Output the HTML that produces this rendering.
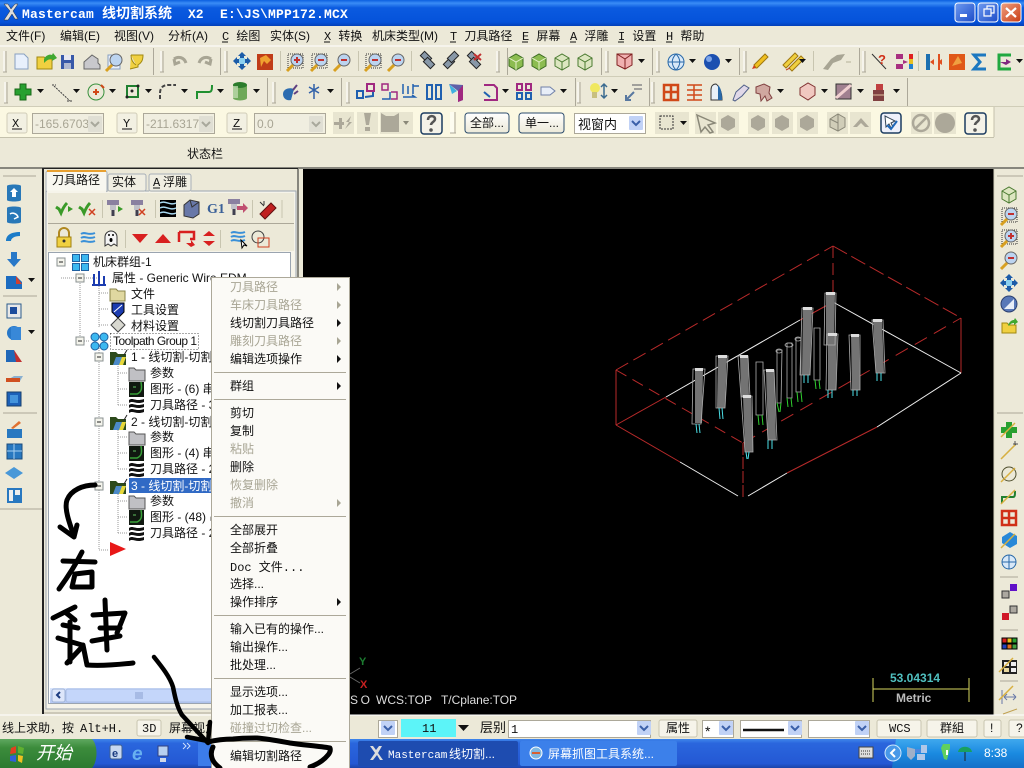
<!DOCTYPE html>
<html lang="zh"><head><meta charset="utf-8"><title>Mastercam</title>
<style>
html,body{margin:0;padding:0;background:#ece9d8;width:1024px;height:768px;overflow:hidden}
svg{display:block}
text{font-family:"Liberation Sans","WenQuanYi Zen Hei","Noto Sans CJK SC",sans-serif;font-size:12px;fill:#111}
.m{font-family:"Liberation Mono","WenQuanYi Zen Hei","Noto Sans CJK SC",monospace}
.d{fill:#a8a594}
.w{fill:#fff}
</style></head><body>
<svg width="1024" height="768" viewBox="0 0 1024 768" xmlns="http://www.w3.org/2000/svg">
<defs>
<linearGradient id="tb" x1="0" y1="0" x2="0" y2="1"><stop offset="0" stop-color="#0a5fe0"/><stop offset=".12" stop-color="#3a8cf6"/><stop offset=".3" stop-color="#0b5be0"/><stop offset=".85" stop-color="#0552da"/><stop offset="1" stop-color="#0340b8"/></linearGradient>
<linearGradient id="task" x1="0" y1="0" x2="0" y2="1"><stop offset="0" stop-color="#3f86ea"/><stop offset=".15" stop-color="#2a66dd"/><stop offset=".85" stop-color="#2458d4"/><stop offset="1" stop-color="#1c44a8"/></linearGradient>
<linearGradient id="tray" x1="0" y1="0" x2="0" y2="1"><stop offset="0" stop-color="#3fa8ee"/><stop offset=".5" stop-color="#1a8ae0"/><stop offset="1" stop-color="#1570c8"/></linearGradient>
<linearGradient id="start" x1="0" y1="0" x2="0" y2="1"><stop offset="0" stop-color="#5fa860"/><stop offset=".3" stop-color="#3c8c3c"/><stop offset="1" stop-color="#2c7a30"/></linearGradient>
<linearGradient id="btn" x1="0" y1="0" x2="0" y2="1"><stop offset="0" stop-color="#fff"/><stop offset="1" stop-color="#ece9d8"/></linearGradient>
<linearGradient id="wb" x1="0" y1="0" x2="1" y2="1"><stop offset="0" stop-color="#6f9bf0"/><stop offset="1" stop-color="#1c4cc8"/></linearGradient>
<linearGradient id="wr" x1="0" y1="0" x2="1" y2="1"><stop offset="0" stop-color="#f0a080"/><stop offset="1" stop-color="#c83c14"/></linearGradient>
<linearGradient id="sc" x1="0" y1="0" x2="0" y2="1"><stop offset="0" stop-color="#dbe6fc"/><stop offset="1" stop-color="#b4c8f4"/></linearGradient>

<g id="arr"><path d="M-3-2h7l-3.500 4z" fill="#111"/></g>
<g id="grip"><path d="M1 3v21" stroke="#fff" fill="none"/><path d="M3 3v21" stroke="#aca899" fill="none"/><path d="M0 24h4" stroke="#aca899"/></g>
<g id="sel"><rect x="-7" y="-7" width="14" height="14" fill="#c1d2f6" rx="1"/><path d="M-4-2l4 4 4-4" stroke="#3a5fa8" stroke-width="2" fill="none"/></g>
<g id="seld"><rect x="-7" y="-8" width="14" height="16" fill="#e0dfd4" rx="1"/><path d="M-4-2l4 4 4-4" stroke="#a8a89c" stroke-width="2" fill="none"/></g>
<g id="cube"><path d="M-7-4L0-8l7 4v8l-7 4-7-4z" fill="#8cbc50" stroke="#3a6a20"/><path d="M-7-4l7 4 7-4M0 0v8" stroke="#e4f0c8" fill="none"/></g>
<g id="cube2"><path d="M-7-4L0-8l7 4v8l-7 4-7-4z" fill="#dce6c0" stroke="#4a7a30"/><path d="M-7-4l7 4 7-4M0 0v8" stroke="#4a7a30" fill="none"/></g>
<g id="mag"><circle cx="2" cy="-2" r="6" fill="#bcd4f0" stroke="#666"/><path d="M-2 3l-6 6" stroke="#d8a020" stroke-width="3"/></g>
<g id="magp"><rect x="-7" y="-8" width="15" height="14" fill="none" stroke="#333" stroke-dasharray="1 1"/><use href="#mag"/><path d="M-1-2h6M2-5v6" stroke="#c03030" stroke-width="2"/></g>
<g id="magm"><use href="#mag"/><path d="M-1-2h6" stroke="#c03030" stroke-width="2"/></g>
<g id="magb"><rect x="-7" y="-8" width="15" height="14" fill="none" stroke="#333" stroke-dasharray="1 1"/><use href="#magm"/></g>
<g id="pan"><path d="M0-9l4 4H2v3h3V-4l4 4-4 4V2H2v3h2l-4 4-4-4h2V2h-3v2l-4-4 4-4v2h3v-3h-2z" fill="#1c5ca8"/><rect x="-3" y="-3" width="6" height="6" fill="#8cd0f0"/></g>
<g id="cy"><rect x="-7" y="-6" width="14" height="13" fill="#6ea858"/><ellipse cx="0" cy="-6" rx="7" ry="3" fill="#2c7c2c"/><ellipse cx="0" cy="7" rx="7" ry="2.500" fill="#6ea858"/><rect x="-7" y="-5" width="5" height="12" fill="#c8e0b8" opacity=".7"/></g>
<g id="disb"><rect x="-10" y="-11" width="21" height="22" fill="#e8e5d0"/></g>
<g id="hex"><use href="#disb"/><path d="M-7-4l7-4 7 4v8l-7 4-7-4z" fill="#aca899"/></g>
<g id="que"><rect x="-10" y="-10" width="21" height="21" rx="3" fill="#f4f2e8" stroke="#1c3c60" stroke-width="1.500"/><path d="M-3-3c0-5 7-5 7-1 0 3-4 3-4 6" stroke="#555" stroke-width="2.500" fill="none"/><circle cx="0" cy="7" r="1.800" fill="#555"/></g>
<g id="fold"><path d="M-8-5h6l2 2h7v10H-8z" fill="#e0d8a0" stroke="#8a8448"/></g>
<g id="opfold"><path d="M-8-5h6l2 2h8v11H-8z" fill="#2c4a1c"/><path d="M-5 8l3-8h10l-3 8z" fill="#4c8ac8"/><path d="M1 8l3-8h4l-3 8z" fill="#e8d838"/><path d="M6-2l3-5" stroke="#222"/></g>
<g id="gfold"><path d="M-8-5h5l2 2h9v11H-8z" fill="#c0c0c4" stroke="#555"/></g>
<g id="geom"><rect x="-8" y="-7" width="15" height="15" fill="#101810"/><path d="M4-7c1 6 1 10-4 12H-7" stroke="#38a038" stroke-width="1.500" fill="none"/><path d="M-4-2h3" stroke="#60c060"/></g>
<g id="wave"><rect x="-8" y="-7" width="15" height="15" fill="#fff"/><path d="M-8-5c4-3 6 2 15-1v3c-8 3-11-2-15 1zM-8 0c4-3 6 2 15-1v3c-8 3-11-2-15 1zM-8 5c4-3 6 2 15-1v3c-8 3-11-2-15 1z" fill="#111"/></g>
<g id="bw"><path d="M-7-4c4-3 7 2 14-1M-7 0c4-3 7 2 14-1M-7 4c4-3 7 2 14-1" stroke="#3a90d8" stroke-width="2" fill="none"/></g>
<g id="minus"><rect x="-4" y="-4" width="8" height="8" fill="#f4f4ec" stroke="#8a9090"/><path d="M-2 0h4" stroke="#222"/></g>
<g id="tool"><rect x="-6" y="-8" width="12" height="5" fill="#8a80a0"/><rect x="-3" y="-3" width="6" height="5" fill="#c0c0c8"/><rect x="-1.500" y="2" width="3" height="6" fill="#404050"/></g>
<g id="chk"><path d="M-7-1l3 2 2 4c2-5 4-8 6-10" stroke="#3a9a28" stroke-width="3" fill="none"/></g>
<g id="la"><path d="M-6-5l12 10M-2-7l-4 2 2 4" stroke="#3a90d0" fill="none"/></g>
<g id="blk"><rect x="-7" y="-7" width="14" height="14" fill="#1c60b8" stroke="#18406c"/><rect x="-4" y="-4" width="8" height="8" fill="#4494dc"/></g>
<g id="ps"><path d="M-8 8l14-14" stroke="#d8b040" stroke-width="1.500"/></g>
</defs>

<rect width="1024" height="768" fill="#ece9d8"/>
<!-- title -->
<rect width="1024" height="26" fill="url(#tb)"/>
<path d="M4 4l6 7-6 9h4l4-6 3 5h3l-5-8 5-7h-3l-4 5-3-5z" fill="#ddd" stroke="#333" stroke-width=".5"/>
<text x="22" y="18" class="w m" style="font-size:13px;font-weight:700;letter-spacing:.2px">Mastercam</text>
<text x="102" y="18" class="w" style="font-size:14px;font-weight:700">线切割系统</text>
<text x="188" y="18" class="w m" style="font-size:13px;font-weight:700">X2</text>
<text x="220" y="18" class="w m" style="font-size:13px;font-weight:700;letter-spacing:.2px">E:\JS\MPP172.MCX</text>
<rect x="955" y="3" width="20" height="19" rx="3" fill="url(#wb)" stroke="#fff"/><rect x="960" y="14" width="7" height="3" fill="#fff"/>
<rect x="978" y="3" width="20" height="19" rx="3" fill="url(#wb)" stroke="#fff"/><path d="M984 9h7v7h-7zM987 9V6h7v7h-3" fill="none" stroke="#fff" stroke-width="1.200"/>
<rect x="1001" y="3" width="20" height="19" rx="3" fill="url(#wr)" stroke="#fff"/><path d="M1006 8l10 9M1016 8l-10 9" stroke="#fff" stroke-width="2.200"/>

<!-- menu -->
<g>
<text x="6" y="40">文件(F)</text><text x="60" y="40">编辑(E)</text><text x="114" y="40">视图(V)</text><text x="168" y="40">分析(A)</text>
<text x="222" y="40" class="m">C 绘图</text><text x="270" y="40">实体(S)</text><text x="324" y="40" class="m">X 转换</text><text x="372" y="40">机床类型(M)</text>
<text x="450" y="40" class="m">T 刀具路径</text><text x="522" y="40" class="m">E 屏幕</text><text x="570" y="40" class="m">A 浮雕</text><text x="618" y="40" class="m">I 设置</text><text x="666" y="40" class="m">H 帮助</text>
</g>
<path d="M222 42h6M324 42h6M450 42h6M522 42h6M570 42h6M618 42h6M666 42h6" stroke="#111"/>
<path d="M0 46h1024" stroke="#fff"/><path d="M0 76.500h1024M0 106.500h1024" stroke="#d0cdb8"/>
<!-- yellow bar -->
<rect x="0" y="107" width="994" height="30" fill="#fbf8e2"/>
<path d="M0 137.500h994M994 107v30" stroke="#c4c1ac"/>
<path d="M0 168h1024" stroke="#222" stroke-width="1"/>
<text x="187" y="158">状态栏</text>

<!-- toolbar 1 separators -->
<path d="M153.500 48v27M220.500 48v27M601.500 48v27M652.500 48v27M739.500 48v27M859.500 48v27M267.500 78v28M341.500 78v28M575.500 78v28M649.500 78v28M907.500 78v28" stroke="#aca899"/>
<path d="M280.500 51v20M358.500 51v20M411.500 51v20M813.500 51v20M918.500 51v20" stroke="#c8c5b0"/>
<use href="#grip" x="3" y="48"/><use href="#grip" x="160" y="48"/><use href="#grip" x="224" y="48"/><use href="#grip" x="496" y="48"/><use href="#grip" x="605" y="48"/><use href="#grip" x="656" y="48"/><use href="#grip" x="743" y="48"/><use href="#grip" x="862" y="48"/>
<use href="#grip" x="4" y="79"/><use href="#grip" x="272" y="79"/><use href="#grip" x="346" y="79"/><use href="#grip" x="577" y="79"/><use href="#grip" x="651" y="79"/><use href="#grip" x="450" y="109"/>

<!-- row1 icons -->
<path d="M15 54h9l4 4v11H15z" fill="#e8f0fc" stroke="#88a0c0"/>
<path d="M37 57h7l2 2h6v10H37z" fill="#f0d040" stroke="#a08810"/><path d="M44 59c2-4 6-5 8-4l1-2 4 5-5 3v-2c-3 0-5 1-8 4z" fill="#40a830"/>
<rect x="61" y="55" width="13" height="14" fill="#3858a8"/><rect x="64" y="55" width="7" height="5" fill="#e8e8f0"/><rect x="64" y="63" width="7" height="6" fill="#b0b8d0"/>
<path d="M84 62l8-7 6 4v4l2 2v4H84z" fill="#c8c8cc" stroke="#666"/>
<path d="M108 55h9l3 3v11h-12z" fill="#e8f0fc" stroke="#88a0c0"/><use href="#mag" x="114" y="62"/>
<path d="M131 55h12c0 6-2 8-5 10v2l-8 2M131 55c0 5 2 8 5 10" fill="#f0d040" stroke="#a08810"/>
<path d="M174 59c4-3 10-2 12 4M174 59l1 5 5-2" fill="none" stroke="#a8a594" stroke-width="3"/><path d="M211 59c-4-3-10-2-12 4M211 59l-1 5-5-2" fill="none" stroke="#a8a594" stroke-width="3"/>
<use href="#pan" x="242" y="61"/>
<rect x="257" y="54" width="16" height="16" fill="#c03c18"/><path d="M260 58l6-3 5 5-4 4-3-3-3 6z" fill="#f0a030"/>
<use href="#magp" x="295" y="62"/><use href="#magb" x="319" y="62"/><use href="#magm" x="342" y="62"/><use href="#magb" x="373" y="62"/><use href="#magm" x="396" y="62"/>
<g fill="#8898a8" stroke="#222"><rect x="421" y="54" width="10" height="6" transform="rotate(45 426 57)"/><rect x="424" y="60" width="10" height="6" transform="rotate(45 429 63)"/><rect x="444" y="60" width="10" height="6" transform="rotate(-45 449 63)"/><rect x="448" y="54" width="10" height="6" transform="rotate(-45 453 57)"/><rect x="468" y="54" width="10" height="6" transform="rotate(45 473 57)"/><rect x="470" y="60" width="10" height="6" transform="rotate(45 475 63)"/></g>
<path d="M474 60l7-6M474 54l7 6" stroke="#c03030" stroke-width="2"/>
<path d="M507.500 48v27" stroke="#aca899"/>
<use href="#cube" x="516" y="62"/><use href="#cube" x="539" y="62"/><use href="#cube2" x="562" y="62"/><use href="#cube2" x="585" y="62"/>
<path d="M617 54h15v11l-7 4-8-4z" fill="#f0b0b0" stroke="#802020"/><path d="M617 54l8 5 7-5M625 59v10" stroke="#802020" fill="none"/><use href="#arr" x="641" y="61"/>
<circle cx="676" cy="62" r="8" fill="#d8e8f8" stroke="#2868a8"/><path d="M668 62h16M676 54c-5 5-5 11 0 16M676 54c5 5 5 11 0 16" stroke="#2868a8" fill="none"/><use href="#arr" x="692" y="61"/>
<circle cx="712" cy="62" r="8" fill="#1c50b0"/><circle cx="709" cy="59" r="3" fill="#7ca4e8"/><use href="#arr" x="728" y="61"/>
<path d="M756 68l-2-3 11-11 3 3-11 11z" fill="#f0c020" stroke="#a07810"/><path d="M754 65l2 3-4 1z" fill="#d04020"/>
<path d="M789 68l12-12 3 3-12 12zM783 65l12-12 3 3-12 12z" fill="#f0d040" stroke="#a07810"/><path d="M786 70l4-2" stroke="#c04020"/><use href="#arr" x="802" y="61"/>
<path d="M823 69l8-10 6-4 8-1-4 6-8 3-5 7z" fill="#a8a594"/><path d="M846 62h5" stroke="#d0cdb8" stroke-width="2"/>
<path d="M872 54l14 15" stroke="#333"/><text x="878" y="64" style="fill:#d03018;font-weight:700;font-size:13px">?</text>
<path d="M896 54h7v5h-7zM896 64h7v5h-7zM903 60l5 2-5 2z" fill="#a83080"/><path d="M909 54h4v5h-4z" fill="#e02020"/><path d="M909 59h4v5h-4z" fill="#e8c020"/><path d="M909 64h4v5h-4z" fill="#2080d0"/>
<rect x="926" y="54" width="4" height="16" fill="#1c70b0"/><path d="M930 62l4-3v6zM938 62l4-3v6z" fill="#e05020"/><rect x="938" y="54" width="2" height="16" fill="#e05020"/>
<rect x="949" y="54" width="16" height="16" fill="#e05818"/><path d="M952 66l6-10 4 7z" fill="#f0a040"/>
<path d="M986 55h-12l6 7-6 7h12" fill="none" stroke="#1c78c0" stroke-width="3"/>
<path d="M1011 55h-12v14h12" fill="none" stroke="#20a840" stroke-width="3"/><path d="M1000 62h6v-3l5 3-5 3z" fill="#802880" /><use href="#arr" x="1019" y="61"/>

<!-- row2 icons -->
<path d="M20 84h6v5h5v6h-5v5h-6v-5h-5v-6h5z" fill="#28a030" stroke="#186818"/><use href="#arr" x="40" y="91"/>
<path d="M54 86l16 15M52 85h4M67 101h5" stroke="#404040" stroke-dasharray="2 1" fill="none"/><use href="#arr" x="76" y="91"/>
<circle cx="96" cy="92" r="8" fill="none" stroke="#38903c"/><path d="M93 92h6M96 89v6" stroke="#d04818" stroke-width="2"/><path d="M101 85l3 3" stroke="#d04818" stroke-width="2"/><use href="#arr" x="112" y="91"/>
<rect x="127" y="86" width="11" height="11" fill="none" stroke="#208030" stroke-width="2"/><circle cx="127" cy="97" r="1.500" fill="#222"/><circle cx="138" cy="86" r="1.500" fill="#222"/><circle cx="132" cy="91" r="1.500" fill="#222"/><use href="#arr" x="148" y="91"/>
<path d="M160 99v-6c0-5 3-8 8-8h8" fill="none" stroke="#444" stroke-width="2" stroke-dasharray="4 2"/><use href="#arr" x="184" y="91"/>
<path d="M197 99v-7h12c3 0 3-3 3-7" fill="none" stroke="#209030" stroke-width="2"/><use href="#arr" x="220" y="91"/>
<use href="#cy" x="240" y="91"/><use href="#arr" x="256" y="91"/>
<path d="M283 94c0-5 6-7 11-5l-3 11c-5 1-8-2-8-6z" fill="#2c6cb0"/><path d="M293 90l4-5M294 94l4-3" stroke="#604080" stroke-width="2"/>
<path d="M314 84v15M309 87l10 6M319 87l-10 6" stroke="#3060a8" stroke-width="1.500"/><use href="#arr" x="330" y="91"/>
<g fill="none" stroke="#2060b0" stroke-width="2"><rect x="357" y="91" width="6" height="7"/><rect x="427" y="85" width="5" height="14"/><rect x="436" y="85" width="5" height="14"/></g><rect x="367" y="84" width="7" height="7" fill="none" stroke="#a02880" stroke-width="2"/>
<path d="M365 97l8-1v-4" stroke="#2060b0" stroke-width="2" fill="none"/>
<path d="M382 84h6v6h-6zM391 92h6v7h-6" fill="none" stroke="#a02880" stroke-width="1.500"/><path d="M390 92v7h-8" stroke="#2060b0" stroke-width="1.500" fill="none"/>
<path d="M403 84v10M408 86v8M413 84v10M419 86h-6M403 97h12l-3-2" stroke="#2060b0" stroke-width="1.500" fill="none"/>
<path d="M449 84l14 1v15l-5 2v-11z" fill="#6060a8"/><path d="M449 84l8 7-5 3z" fill="#40b0e0"/><path d="M458 91l5-6v15l-5 2z" fill="#a02880"/>
<path d="M484 85h10l3 3v12h-13" fill="none" stroke="#a02880" stroke-width="2"/><path d="M484 92l6 5" stroke="#2060b0" stroke-width="2"/><use href="#arr" x="505" y="91"/>
<g fill="none" stroke="#a02880" stroke-width="2"><rect x="517" y="84" width="5" height="6"/><rect x="526" y="84" width="5" height="6"/></g><g fill="none" stroke="#2060b0" stroke-width="2"><rect x="517" y="93" width="5" height="6"/><rect x="526" y="93" width="5" height="6"/></g>
<path d="M541 87h9l5 4-5 4h-9z" fill="#e8eef8" stroke="#7080a8"/><use href="#arr" x="563" y="91"/>
<circle cx="595" cy="88" r="5" fill="#f0e860"/><rect x="592" y="92" width="5" height="6" fill="#c8c080"/><path d="M604 84v14M601 87l3-3 3 3M601 95l3 3 3-3" stroke="#3a6a90" fill="none" stroke-width="1.500"/><use href="#arr" x="614" y="91"/>
<path d="M626 100l8-8M626 95v5h5" stroke="#5878a0" stroke-width="2" fill="none"/><path d="M632 85h10M634 89h8" stroke="#888" stroke-width="1.500"/>
<path d="M664 85h14v15h-14zM671 85v15M664 92h14" fill="none" stroke="#d04818" stroke-width="2.500"/>
<path d="M687 85h15M687 90h15M687 95h15M687 100h15M694 85v15" fill="none" stroke="#d04818" stroke-width="1.500"/>
<path d="M711 100V90c0-4 2-6 5-6 3 2 6 8 6 16z" fill="#e8f0f8" stroke="#333"/><path d="M718 85c3 3 4 8 4 15h-4z" fill="#2868a8"/>
<path d="M733 100l3-8 8-7 5 3-7 8-7 5z" fill="#e0d8e8" stroke="#506088"/>
<path d="M756 87l8-3 6 3-1 6 3 5-5 3-2-5-4 5-1-7-4-1z" fill="#d0a8a0" stroke="#804040"/><use href="#arr" x="780" y="91"/>
<path d="M800 88l8-5 7 4v8l-7 5-8-5z" fill="#f0c8c0" stroke="#803030"/><use href="#arr" x="824" y="91"/>
<rect x="836" y="84" width="15" height="15" fill="#a08090" stroke="#333"/><path d="M836 98l15-13" stroke="#f0d0d0" stroke-width="3"/><use href="#arr" x="860" y="91"/>
<rect x="876" y="84" width="7" height="6" fill="#c04040"/><rect x="873" y="90" width="11" height="11" fill="#804040"/><path d="M873 95h11" stroke="#e0c0a0"/><use href="#arr" x="896" y="91"/>

<!-- row3 -->
<rect x="7" y="113" width="20" height="20" rx="2" fill="#f2f0e2" stroke="#d0cdb8"/><text x="12" y="127" class="m">X</text><path d="M12 129h10" stroke="#111"/>
<rect x="32.500" y="113.500" width="71" height="20" fill="#f0eee0" stroke="#aca899"/><text x="35" y="128" class="d">-165.6703</text><use href="#seld" x="95" y="124"/>
<rect x="117" y="113" width="20" height="20" rx="2" fill="#f2f0e2" stroke="#d0cdb8"/><text x="123" y="127" class="m">Y</text><path d="M122 129h10" stroke="#111"/>
<rect x="143.500" y="113.500" width="71" height="20" fill="#f0eee0" stroke="#aca899"/><text x="146" y="128" class="d">-211.6317</text><use href="#seld" x="206" y="124"/>
<rect x="227" y="113" width="20" height="20" rx="2" fill="#f2f0e2" stroke="#d0cdb8"/><text x="233" y="127" class="m">Z</text><path d="M232 129h10" stroke="#111"/>
<rect x="254.500" y="113.500" width="71" height="20" fill="#f0eee0" stroke="#aca899"/><text x="257" y="128" class="d">0.0</text><use href="#seld" x="316" y="124"/>
<rect x="333" y="112" width="21" height="22" fill="#e8e5d0"/><path d="M334 122h5v-4h3v4h2v3h-2v4h-3v-4h-5zM345 129l4-7h-3l5-6-2 6h3z" fill="#aca899"/>
<rect x="357" y="112" width="21" height="22" fill="#e8e5d0"/><path d="M364 113h7l-2 12h-3zM365 127h5v4h-5z" fill="#aca899"/>
<rect x="380" y="112" width="33" height="22" fill="#e8e5d0"/><path d="M381 113l5 3h8l5-3v19h-18z" fill="#aca899"/><path d="M403 121h6l-3 4z" fill="#8a8878"/>
<use href="#que" x="431" y="123"/>
<use href="#grip" x="452" y="109"/>
<rect x="465" y="113" width="44" height="20" rx="3" fill="url(#btn)" stroke="#2c4c6c"/><text x="470" y="127">全部...</text>
<rect x="519" y="113" width="45" height="20" rx="3" fill="url(#btn)" stroke="#2c4c6c"/><text x="525" y="127">单一...</text>
<rect x="574.500" y="113.500" width="71" height="20" fill="#fff" stroke="#aca899"/><text x="578" y="129" style="font-size:13px">视窗内</text><use href="#sel" x="636" y="123"/>
<rect x="655" y="112" width="34" height="22" fill="#e8e5d0"/><rect x="660" y="116" width="13" height="13" fill="none" stroke="#333" stroke-dasharray="2 1"/><use href="#arr" x="683" y="123"/>
<rect x="695" y="112" width="21" height="22" fill="#e8e5d0"/><path d="M697 115l18 8-7 2 5 7-3 1-5-6-4 5z" fill="#e8e5d0" stroke="#8a8878" stroke-width="1.500"/>
<use href="#hex" x="728" y="123"/><use href="#hex" x="758" y="123"/><use href="#hex" x="782" y="123"/><use href="#hex" x="807" y="123"/>
<rect x="827" y="112" width="21" height="22" fill="#e8e5d0"/><path d="M830 119l8-5 7 4v9l-7 4-8-4z" fill="#d0cdb8" stroke="#8a8878"/><path d="M838 114v17M830 119l8 4" stroke="#8a8878"/>
<rect x="850" y="112" width="21" height="22" fill="#e8e5d0"/><path d="M853 127l8-9 8 9-4 0-4-4-4 4z" fill="#aca899"/>
<rect x="881" y="113" width="20" height="20" rx="3" fill="#eef0fa" stroke="#1c3c60" stroke-width="1.500"/><path d="M885 116l10 5-4 2 2 4-2 1-2-4-3 3z" fill="#fff" stroke="#345"/><path d="M887 125l4 4 6-8" stroke="#2068b8" stroke-width="2" fill="none"/>
<rect x="911" y="112" width="21" height="22" fill="#e8e5d0"/><circle cx="921" cy="123" r="8" fill="none" stroke="#aca899" stroke-width="2.500"/><path d="M915 129l12-12" stroke="#aca899" stroke-width="2.500"/>
<rect x="934" y="112" width="22" height="22" fill="#e8e5d0"/><circle cx="945" cy="123" r="10" fill="#aca899"/>
<use href="#que" x="975" y="123"/>

<!-- viewport -->
<rect x="303" y="169" width="691" height="546" fill="#000"/>

<!-- 3D scene -->
<g fill="none" stroke-width="1">
<g stroke="#b82a2a">
<path d="M616 370L833 246" stroke-dasharray="14 6"/><path d="M833 246L961 318" stroke-dasharray="16 5"/>
<path d="M616 370L743 443" stroke-dasharray="12 7"/><path d="M743 443L961 318" stroke-dasharray="14 8"/>
<path d="M833 246V302" stroke-dasharray="12 5"/><path d="M743 443V497" stroke-dasharray="12 2"/>
<path d="M616 370v55M961 318v55"/>
<path d="M616 425L666 397"/><path d="M800 320L833 302"/><path d="M616 425L680 462"/>
<path d="M787 473L877 427"/>
</g>
<g stroke="#eeeeee"><path d="M666 397L800 320"/><path d="M833 302L961 373"/><path d="M961 373L877 427"/><path d="M787 473L748 496"/><path d="M680 462L738 496"/></g>
</g>
<!-- gray tool bodies: outline then solid core -->
<g fill="#737373" stroke="none">
<path d="M695 369h8l-1 54h-7z"/>
<path d="M718 356h9l-2 52h-8z"/>
<path d="M740 356h8l1 41h-8z"/><path d="M743 396h8l2 56h-8z"/>
<path d="M766 370h8l2 70h-8z"/>
<path d="M803 308h9l-2 67h-8z"/><path d="M826 293h9l-1 52h-8z"/>
<path d="M828 334h9l-1 56h-8z"/><path d="M851 335h8l1 55h-8z"/><path d="M873 320h9l2 53h-8z"/>
</g>
<g fill="none" stroke="#b0b0b0" stroke-width=".8">
<path d="M693 369h12l-4 55h-9zM716 356h12l-3 52h-9zM738 356h10l2 41h-9zM741 396h11l1 56h-8zM764 370h10l3 70h-9zM802 308h11l-3 67h-10zM825 293h11l-1 52h-11zM827 334h11l-2 56h-10zM849 335h11l0 55h-9zM872 320h11l2 53h-9z"/>
<path d="M756 362h7v53h-7zM777 350h5l-1 53h-4zM787 343h5v55h-5zM796 338h5v54h-5zM814 328h6v52h-6z"/>
<ellipse cx="779" cy="351" rx="3" ry="2"/><ellipse cx="789" cy="345" rx="4" ry="2"/><ellipse cx="798" cy="339" rx="3" ry="2"/>
</g>
<g fill="#ddd"><rect x="695" y="368" width="8" height="3"/><rect x="718" y="355" width="9" height="3"/><rect x="740" y="355" width="8" height="3"/><rect x="743" y="395" width="8" height="3"/><rect x="766" y="369" width="8" height="3"/><rect x="803" y="307" width="9" height="3"/><rect x="826" y="292" width="9" height="3"/><rect x="828" y="333" width="9" height="3"/><rect x="851" y="334" width="8" height="3"/><rect x="873" y="319" width="9" height="3"/></g>
<g stroke="#4ce0e8" fill="none" stroke-width="1"><path d="M696 424l1 9M699 424l1 9M719 408l1 11M722 408l1 11M746 452l1 7M749 452l-1 7M768 440v9M772 440v9M804 375v8M808 375v8M877 373v8M881 373v8M853 390v6M857 390v6M828 390v8M832 390v8"/></g>
<g stroke="#30d030" fill="none" stroke-width="1"><path d="M758 415l1 10M762 415l1 10M777 403l2 9M781 403l-1 9M787 398l1 9M791 398l1 9M797 392l1 10M801 392l1 10M815 380l1 9M819 380l1 9"/></g>

<text x="350" y="704" style="fill:#ddd" textLength="20">SO</text><text x="376" y="704" style="fill:#ddd" textLength="56">WCS:TOP</text><text x="441" y="704" style="fill:#ddd" textLength="76">T/Cplane:TOP</text>
<text x="359" y="665" style="fill:#1c7c30;font-weight:700;font-size:11px">Y</text><text x="360" y="688" style="fill:#c82020;font-weight:700;font-size:11px">X</text>
<path d="M350 674l10-6M350 677l10 6" stroke="#666"/>
<path d="M873 678v24M969 678v24M873 689h96" stroke="#d8d860" fill="none"/>
<text x="890" y="682" style="fill:#50c0c0;font-weight:700">53.04314</text><text x="896" y="702" style="fill:#bbb;font-weight:700">Metric</text>

<!-- left toolbar -->
<path d="M3 176h33" stroke="#aca899"/>
<rect x="42" y="168" width="2" height="546" fill="#222"/>
<g>
<path d="M7 186c0-2 14-2 14 0v14c0 2-14 2-14 0z" fill="#2878b8"/><path d="M14 188l-4 4h2v5h4v-5h2z" fill="#fff"/>
<path d="M7 208c0-2 14-2 14 0v14c0 2-14 2-14 0z" fill="#2878b8"/><path d="M10 214c3-2 7 0 8 3l-4 2" stroke="#fff" stroke-width="1.500" fill="none"/>
<path d="M6 241c0-6 5-9 14-9v4c-5 0-9 2-9 5z" fill="#1c7cc8"/>
<path d="M11 252h6v7h4l-7 8-7-8h4z" fill="#2878c8"/>
<path d="M6 276h10l6 6v7H6z" fill="#1c6cc0"/><path d="M16 276l6 8h-6z" fill="#d04030"/><use href="#arr" x="31" y="280"/>
<path d="M3 296h34" stroke="#aca899"/>
<rect x="7" y="304" width="14" height="14" fill="#e8e8e8" stroke="#2c5c8c"/><rect x="10" y="307" width="7" height="7" fill="#1c4c9c"/>
<circle cx="14" cy="333" r="7" fill="#2878c8"/><rect x="11" y="327" width="10" height="13" fill="#3888d8"/><use href="#arr" x="31" y="332"/>
<path d="M6 350h8l8 12H6z" fill="#c03030"/><path d="M6 350h8l2 12H6z" fill="#2068b8"/>
<path d="M6 381l8-5h9l-3 5z" fill="#8ab0d0"/><rect x="6" y="378" width="14" height="4" fill="#d05020"/>
<use href="#blk" x="14" y="399"/>
<path d="M3 413h34" stroke="#aca899"/>
<rect x="7" y="429" width="15" height="9" fill="#2878c0"/><path d="M11 428l8-7 2 2-8 6z" fill="#e07030"/>
<rect x="7" y="444" width="15" height="15" fill="#2878c0" stroke="#1c4c7c"/><path d="M14 444v15M7 451h15" stroke="#a8d0f0"/>
<path d="M5 473l9-6 9 6-9 6z" fill="#4898d8"/>
<rect x="7" y="488" width="15" height="15" fill="#2878c0"/><rect x="9" y="490" width="4" height="11" fill="#eee"/><rect x="15" y="490" width="5" height="5" fill="#eee"/>
<path d="M0 509h42" stroke="#aca899"/>
</g>

<!-- panel -->
<rect x="44" y="168" width="254" height="546" fill="#ece9d8"/>
<path d="M298 169v545" stroke="#222" stroke-width="1"/>
<path d="M44 168.500h254" stroke="#222"/>
<path d="M44 713h254" stroke="#aca899"/>
<rect x="46" y="191" width="250" height="518" fill="#f6f4ea" stroke="#9aa4b0"/>
<path d="M108 190h37v2h-37zM149 190h42v2h-42z" fill="#e8e5d8"/>
<rect x="108" y="174" width="38" height="17" rx="2" fill="#f0eee2" stroke="#a8b0b8"/><rect x="149" y="174" width="42" height="17" rx="2" fill="#f0eee2" stroke="#a8b0b8"/>
<rect x="46" y="171" width="61" height="21" rx="2" fill="#f8f7f0" stroke="#a8b0b8"/><path d="M47 171h59" stroke="#e8a030" stroke-width="2"/><path d="M47 191.500h59" stroke="#f6f4ea" stroke-width="2"/>
<text x="52" y="184">刀具路径</text><text x="112" y="186">实体</text><text x="153" y="186" class="m">A</text><text x="163" y="186">浮雕</text><path d="M153 188h7" stroke="#111"/>
<rect x="48" y="193" width="246" height="58" fill="#ece9d8"/>
<path d="M48 223.500h246" stroke="#aca899"/>
<path d="M102.500 200v18M155.500 200v18M252.500 200v18M125.500 230v18M220.500 230v18M282 200v18" stroke="#c8c5b0"/>
<use href="#chk" x="63" y="208"/><path d="M68 206l5 3-5 3z" fill="#3a9a28"/>
<use href="#chk" x="86" y="208"/><path d="M89 209l6 6M95 209l-6 6" stroke="#d04020" stroke-width="1.500"/>
<use href="#tool" x="113" y="208"/><path d="M118 206l5 3-5 3z" fill="#3a9a28"/>
<use href="#tool" x="137" y="208"/><path d="M139 209l6 6M145 209l-6 6" stroke="#d04020" stroke-width="1.500"/>
<rect x="160" y="200" width="16" height="17" fill="#000"/><path d="M160 203c5-3 10 3 16 0M160 208c5-3 10 3 16 0M160 213c5-3 10 3 16 0" stroke="#a8d8f0" stroke-width="1.500" fill="none"/>
<path d="M184 205l6-5 9 2v12l-6 4-9-2z" fill="#6878a8" stroke="#333"/><path d="M190 200l2 7 7-5" stroke="#333" fill="none"/>
<text x="207" y="213" style="font-family:'Liberation Serif',serif;font-weight:700;font-size:14px;fill:#3a6098">G1</text>
<use href="#tool" x="234" y="207"/><path d="M237 206h6v-3l5 5-5 5v-3h-6z" fill="#c05070"/>
<path d="M260 214l11-11 5 5-11 11z" fill="#c02020" stroke="#601010"/><path d="M260 202l4 4M264 201v4" stroke="#333"/>
<path d="M59 237v-4a5 5 0 0 1 10 0v4" fill="none" stroke="#b08820" stroke-width="2"/><rect x="57" y="237" width="14" height="10" fill="#f0d040" stroke="#a08010"/><circle cx="64" cy="241" r="1.500" fill="#333"/>
<use href="#bw" x="88" y="238"/>
<path d="M105 246v-9a6 6 0 0 1 12 0v9l-3-2-3 2-3-2z" fill="#f4f4f4" stroke="#333"/><circle cx="109" cy="235" r="1" fill="#000"/><circle cx="113" cy="235" r="1" fill="#000"/><ellipse cx="111" cy="240" rx="1.500" ry="2" fill="#000"/>
<path d="M132 234h16l-8 9z" fill="#d82020"/><path d="M155 243h16l-8-9z" fill="#d82020"/>
<path d="M179 232h15v7h-4M179 232v10" stroke="#d82020" stroke-width="2.500" fill="none"/><path d="M186 243h5v-3l4 5-4 2z" fill="#d82020"/>
<path d="M209 231l6 5h-12zM209 246l-6-5h12zM203 238h12" fill="#d82020" stroke="none"/>
<use href="#bw" x="238" y="237"/><path d="M241 240l6 6-3-1-2 3z" fill="#fff" stroke="#000"/>
<circle cx="258" cy="237" r="6" fill="none" stroke="#404040"/><rect x="258" y="238" width="11" height="9" fill="none" stroke="#d04020"/>

<!-- tree -->
<rect x="48.500" y="252.500" width="242" height="451" fill="#fff" stroke="#9aa4b0"/>
<g stroke="#999" stroke-dasharray="1 1" fill="none">
<path d="M61 267v0M80 278H61M80 283v62M99 278h-15M99 278v50"/>
<path d="M99 293h10M99 309h10M99 325h10"/>
<path d="M80 341h9M99 346v140M118 362v44M118 373h10M118 389h10M118 405h10"/>
<path d="M118 426v44M118 437h10M118 453h10M118 469h10"/>
<path d="M118 490v44M118 501h10M118 517h10M118 533h10M99 486v64M99 550h10"/>
</g>
<use href="#minus" x="61" y="262"/>
<g fill="#3cb8f0" stroke="#2060a0"><rect x="72.500" y="254.500" width="7" height="7"/><rect x="81.500" y="254.500" width="7" height="7"/><rect x="72.500" y="263.500" width="7" height="7"/><rect x="81.500" y="263.500" width="7" height="7"/></g>
<text x="93" y="266">机床群组-1</text>
<use href="#minus" x="80" y="278"/>
<path d="M92 285h14M94 274v11M99 271v14M104 276v9" stroke="#1c3cb0" stroke-width="2"/>
<text x="112" y="282">属性 - Generic Wire EDM</text>
<use href="#fold" x="118" y="294"/><text x="131" y="298">文件</text>
<path d="M112 303h12v9l-6 6-6-6z" fill="#1c3cb0" stroke="#000"/><path d="M114 312l8-7" stroke="#fff"/><text x="131" y="314">工具设置</text>
<path d="M111 325l7-7 7 7-7 7z" fill="#d8d8d0" stroke="#444"/><text x="131" y="330">材料设置</text>
<use href="#minus" x="80" y="341"/>
<g fill="#3cb8f0" stroke="#2060a0"><circle cx="95" cy="337" r="4"/><circle cx="104" cy="337" r="4"/><circle cx="95" cy="346" r="4"/><circle cx="104" cy="346" r="4"/></g>
<rect x="110.500" y="333.500" width="88" height="16" fill="none" stroke="#555" stroke-dasharray="1 2"/><text x="113" y="345" textLength="84">Toolpath Group 1</text>
<use href="#minus" x="99" y="357"/><use href="#opfold" x="118" y="357"/><text x="131" y="361">1 - 线切割-切割加工</text>
<use href="#gfold" x="137" y="373"/><text x="150" y="377">参数</text><use href="#geom" x="137" y="389"/><text x="150" y="393">图形 - (6) 串连</text><use href="#wave" x="137" y="405"/><text x="150" y="409">刀具路径 - 3.5K</text>
<use href="#minus" x="99" y="422"/><use href="#opfold" x="118" y="422"/><text x="131" y="426">2 - 线切割-切割加工</text>
<use href="#gfold" x="137" y="437"/><text x="150" y="441">参数</text><use href="#geom" x="137" y="453"/><text x="150" y="457">图形 - (4) 串连</text><use href="#wave" x="137" y="469"/><text x="150" y="473">刀具路径 - 2.5K</text>
<use href="#minus" x="99" y="486"/><use href="#opfold" x="118" y="486"/>
<rect x="129" y="478" width="84" height="15" fill="#316ac5"/><text x="131" y="490" class="w">3 - 线切割-切割加工</text>
<use href="#gfold" x="137" y="501"/><text x="150" y="505">参数</text><use href="#geom" x="137" y="517"/><text x="150" y="521">图形 - (48) 串连</text><use href="#wave" x="137" y="533"/><text x="150" y="537">刀具路径 - 2.5K</text>
<path d="M110 542l16 7-16 7z" fill="#e81818"/>
<!-- scrollbar -->
<rect x="50" y="688" width="240" height="15" fill="url(#sc)"/>
<rect x="52" y="689" width="13" height="13" rx="2" fill="#dde6fa" stroke="#a0b4d8"/><path d="M60 692l-3 3 3 3" stroke="#1c3c80" stroke-width="2" fill="none"/>
<rect x="66" y="689" width="150" height="13" rx="2" fill="#c4d6fa" stroke="#a8bce4"/><path d="M136 692v7M138 692v7M140 692v7M142 692v7" stroke="#8aa0d0"/>

<!-- right toolbar -->
<path d="M994 169v546" stroke="#d8d5c0"/>
<path d="M997 176h26M997 413h26" stroke="#aca899"/>
<use href="#cube2" x="1009" y="195"/><use href="#magb" x="1009" y="216"/><use href="#magp" x="1009" y="238"/><use href="#magm" x="1009" y="260"/><use href="#pan" x="1009" y="283"/>
<circle cx="1009" cy="304" r="8" fill="#5878b8" stroke="#2c4070"/><path d="M1004 309l10-10v10z" fill="#e8eef8"/>
<path d="M1002 323h5l2 2h7v8h-14z" fill="#f0d040" stroke="#a08810"/><path d="M1008 325c2-4 4-5 6-5l1-2 3 4-4 3v-2c-2 0-4 1-5 3z" fill="#40a830"/>
<path d="M1006 422h6v5h5v6h-5v5h-6v-5h-5v-6h5z" fill="#28a030"/><use href="#ps" x="1009" y="429"/>
<path d="M1002 458l14-14M1013 444h5M1015 441v5" stroke="#505050" fill="none"/><use href="#ps" x="1009" y="451"/>
<circle cx="1009" cy="474" r="7" fill="none" stroke="#505030"/><use href="#ps" x="1009" y="474"/>
<path d="M1002 503v-6h11c2 0 2-2 2-6" stroke="#208030" stroke-width="2" fill="none"/><use href="#ps" x="1009" y="496"/>
<path d="M1002 511h14v14h-14zM1009 511v14M1002 518h14" stroke="#d03018" stroke-width="2.500" fill="none"/>
<path d="M1002 537l8-5 7 4v8l-7 4-8-5z" fill="#2888d8"/><use href="#ps" x="1009" y="540"/>
<circle cx="1009" cy="562" r="7" fill="#d8e8f8" stroke="#2868a8"/><path d="M1002 562h14M1009 555v14" stroke="#2868a8"/>
<path d="M1000 577h18" stroke="#aca899"/>
<rect x="1002" y="591" width="7" height="7" fill="#aca8a0" stroke="#333"/><rect x="1010" y="584" width="7" height="7" fill="#6010c8"/>
<rect x="1002" y="613" width="7" height="7" fill="#d01828" /><rect x="1010" y="606" width="7" height="7" fill="#aca8a0" stroke="#333"/>
<path d="M1000 630h18" stroke="#aca899"/>
<g stroke="#000"><rect x="1002" y="638" width="5" height="5" fill="#d82020"/><rect x="1007" y="638" width="5" height="5" fill="#e8c020"/><rect x="1012" y="638" width="5" height="5" fill="#28a030"/><rect x="1002" y="644" width="5" height="5" fill="#2040c0"/><rect x="1007" y="644" width="5" height="5" fill="#e07020"/><rect x="1012" y="644" width="5" height="5" fill="#40a040"/></g>
<rect x="1002" y="660" width="15" height="14" fill="#222"/><rect x="1004" y="662" width="5" height="4" fill="#eee"/><rect x="1011" y="662" width="5" height="4" fill="#eee"/><rect x="1004" y="668" width="5" height="4" fill="#e8d8a0"/><rect x="1011" y="668" width="5" height="4" fill="#eee"/><use href="#ps" x="1007" y="664"/>
<path d="M1000 681h18" stroke="#aca899"/>
<path d="M1002 690v14M1004 697h12M1004 697l3-3M1004 697l3 3M1016 697l-3-3M1016 697l-3 3" stroke="#6878a8" fill="none"/><use href="#ps" x="1007" y="692"/>
<path d="M1003 714l14-5" stroke="#c0a050"/>

<!-- bottom status -->
<rect x="0" y="715" width="1024" height="24" fill="#ece9d8"/>
<path d="M0 715h1024" stroke="#fff"/>
<text x="2" y="732">线上求助，按</text><text x="80" y="732" class="m">Alt+H.</text>
<rect x="137" y="720" width="24" height="16" rx="2" fill="#f6f4ea" stroke="#c8c5b0"/><text x="142" y="732" class="m">3D</text>
<text x="169" y="732">屏幕视角</text>
<rect x="378.500" y="720.500" width="19" height="17" fill="#fff" stroke="#aca899"/><use href="#sel" x="388" y="728"/>
<rect x="401" y="719" width="55" height="18" fill="#5cf4f8"/><text x="422" y="732" class="m">11</text>
<path d="M458 725h11l-5.500 6z" fill="#111"/><text x="480" y="732" style="font-size:13px">层别</text>
<rect x="508.500" y="720.500" width="142" height="17" fill="#fff" stroke="#aca899"/><text x="511" y="733" class="m">1</text><use href="#sel" x="644" y="728"/>
<rect x="659" y="720" width="38" height="17" rx="2" fill="#f6f4ea" stroke="#c8c5b0"/><text x="666" y="732">属性</text>
<rect x="702.500" y="720.500" width="31" height="17" fill="#fff" stroke="#aca899"/><text x="705" y="736" style="font-size:14px">*</text><use href="#sel" x="726" y="728"/>
<rect x="740.500" y="720.500" width="61" height="17" fill="#fff" stroke="#aca899"/><path d="M743 730h41" stroke="#111" stroke-width="2.500"/><use href="#sel" x="795" y="728"/>
<rect x="808.500" y="720.500" width="61" height="17" fill="#fff" stroke="#aca899"/><use href="#sel" x="862" y="728"/>
<rect x="877" y="720" width="44" height="17" rx="2" fill="#f6f4ea" stroke="#c8c5b0"/><text x="889" y="732" class="m">WCS</text>
<rect x="927" y="720" width="50" height="17" rx="2" fill="#f6f4ea" stroke="#c8c5b0"/><text x="940" y="732">群組</text>
<rect x="984" y="720" width="17" height="17" rx="2" fill="#f6f4ea" stroke="#c8c5b0"/><text x="990" y="732">!</text>
<rect x="1009" y="720" width="20" height="17" rx="2" fill="#f6f4ea" stroke="#c8c5b0"/><text x="1016" y="732">?</text>

<!-- taskbar -->
<rect x="0" y="739" width="1024" height="29" fill="url(#task)"/>
<path d="M0 739h92c6 6 6 22 0 29H0z" fill="url(#start)"/>
<g><path d="M11 748l5-2v7l-6 1z" fill="#e04020"/><path d="M18 746l6 2-1 6-5-1z" fill="#60b030"/><path d="M10 756l6-1v7l-6-1z" fill="#3060d8"/><path d="M18 755l5 1-1 7-4-2z" fill="#f0c020"/></g>
<text x="36" y="759" class="w" style="font-size:18px;font-style:italic">开始</text>
<rect x="110" y="745" width="12" height="14" rx="2" fill="#c8d8f0" stroke="#406090"/><text x="112" y="757" style="font-size:11px;fill:#1c3c80;font-weight:700">e</text>
<text x="132" y="760" style="font-size:19px;fill:#68b0f0;font-weight:700;font-style:italic">e</text>
<rect x="158" y="746" width="10" height="10" fill="#b8d0f0" stroke="#304080"/><rect x="160" y="758" width="6" height="4" fill="#d0d8e8"/>
<path d="M183 743l3 3-3 3M187 743l3 3-3 3" stroke="#cfe0fc" fill="none"/>
<rect x="198" y="741" width="16" height="25" fill="#3c7cea"/>
<rect x="358" y="741" width="160" height="25" rx="2" fill="#1e4cb0"/>
<path d="M370 746l5 7-5 7h3l4-5 3 5h3l-5-7 4-7h-3l-3 4-3-4z" fill="#ddd"/>
<text x="388" y="758" class="m w" style="font-size:11px">Mastercam</text><text x="449" y="758" class="w">线切割...</text>
<rect x="520" y="741" width="157" height="25" rx="2" fill="#3c80ea"/>
<circle cx="536" cy="753" r="6" fill="#80b8e0" stroke="#fff"/><path d="M532 753h8" stroke="#d86030" stroke-width="2"/>
<text x="548" y="758" class="w">屏幕抓图工具系统...</text>
<rect x="859" y="747" width="14" height="11" fill="#ddd" stroke="#444"/><path d="M861 751h10M861 754h10" stroke="#333" stroke-dasharray="1 1"/>
<path d="M896 739h128v29H892z" fill="url(#tray)"/>
<circle cx="893" cy="753" r="8" fill="#4898e8" stroke="#cfe8fc"/><path d="M895 749l-4 4 4 4" stroke="#fff" stroke-width="2" fill="none"/>
<path d="M907 747l8 2 0 7-4 4-4-4z" fill="#a0b0c8"/><rect x="915" y="749" width="6" height="4" fill="#4888e0"/><rect x="921" y="745" width="6" height="8" fill="#b0c8e8"/><rect x="917" y="754" width="8" height="6" fill="#b0c8e8"/>
<path d="M943 744h7v4l-3 12-3-1-3-11z" fill="#60d060"/><path d="M947 750v5" stroke="#fff" stroke-width="2"/>
<path d="M958 752c1-7 13-7 14 0z" fill="#18a060"/><path d="M965 752v9" stroke="#222"/>
<text x="984" y="757" class="w">8:38</text>

<!-- context menu -->
<rect x="211.500" y="277.500" width="138" height="491" fill="#fff" stroke="#aca899"/>
<rect x="212" y="278" width="137" height="490" fill="#fbfaf6"/>
<g style="font-size:12px">
<text x="230" y="291" class="d">刀具路径</text><text x="230" y="309" class="d">车床刀具路径</text><text x="230" y="327">线切割刀具路径</text><text x="230" y="345" class="d">雕刻刀具路径</text><text x="230" y="363">编辑选项操作</text>
<text x="230" y="390">群组</text>
<text x="230" y="417">剪切</text><text x="230" y="435">复制</text><text x="230" y="453" class="d">粘贴</text><text x="230" y="471">删除</text><text x="230" y="489" class="d">恢复删除</text><text x="230" y="507" class="d">撤消</text>
<text x="230" y="534">全部展开</text><text x="230" y="552">全部折叠</text><text x="230" y="571" class="m">Doc 文件...</text><text x="230" y="588">选择...</text><text x="230" y="606">操作排序</text>
<text x="230" y="633">输入已有的操作...</text><text x="230" y="651">输出操作...</text><text x="230" y="669">批处理...</text>
<text x="230" y="696">显示选项...</text><text x="230" y="714">加工报表...</text><text x="230" y="732" class="d">碰撞过切检查...</text>
<text x="230" y="760">编辑切割路径</text>
</g>
<path d="M214 372.500h132M214 399.500h132M214 516.500h132M214 615.500h132M214 678.500h132M214 741.500h132" stroke="#aca899"/>
<path d="M337 283l4 4-4 4zM337 301l4 4-4 4zM337 337l4 4-4 4zM337 499l4 4-4 4z" fill="#a8a594"/>
<path d="M337 319l4 4-4 4zM337 355l4 4-4 4zM337 382l4 4-4 4zM337 598l4 4-4 4z" fill="#111"/>

<!-- handwriting -->
<g fill="none" stroke="#000" stroke-width="5" stroke-linecap="round" stroke-linejoin="round">
<path d="M95 485c-12 0-24 5-28 15-3 8 2 22 7 36"/><path d="M60 527l14 10 3-12"/>
<path d="M63 561l32 1M82 552c-7 14-15 26-23 37M75 574l17-2 0 15-20 0z"/>
<path d="M75 607l-22 11M65 612l10 8M63 625l15 3M58 638l24 7M70 622v40M67 663l15-16"/>
<path d="M93 615l32-2-8 20M100 628h20M92 641l28-5M105 600l2 50"/><path d="M83 645l4 20c12 1 28 0 46-2"/>
<path d="M154 657c8 10 16 20 19 30 2 10 4 20 9 28l26 28" stroke-width="4.500"/><path d="M187 737l21 4M210 722l-2 20" stroke-width="4.500"/>
<path d="M208 742c8-2 16-3 25-3 9-1 17-1 24-1 12 1 22 3 33 5 13 2 28 3 40 5 1 3-1 6-2 7-4 5-10 9-18 12M213 747c-2 4-2 8-1 11 1 4 4 7 8 10"/>
</g>
</svg>
</body></html>
